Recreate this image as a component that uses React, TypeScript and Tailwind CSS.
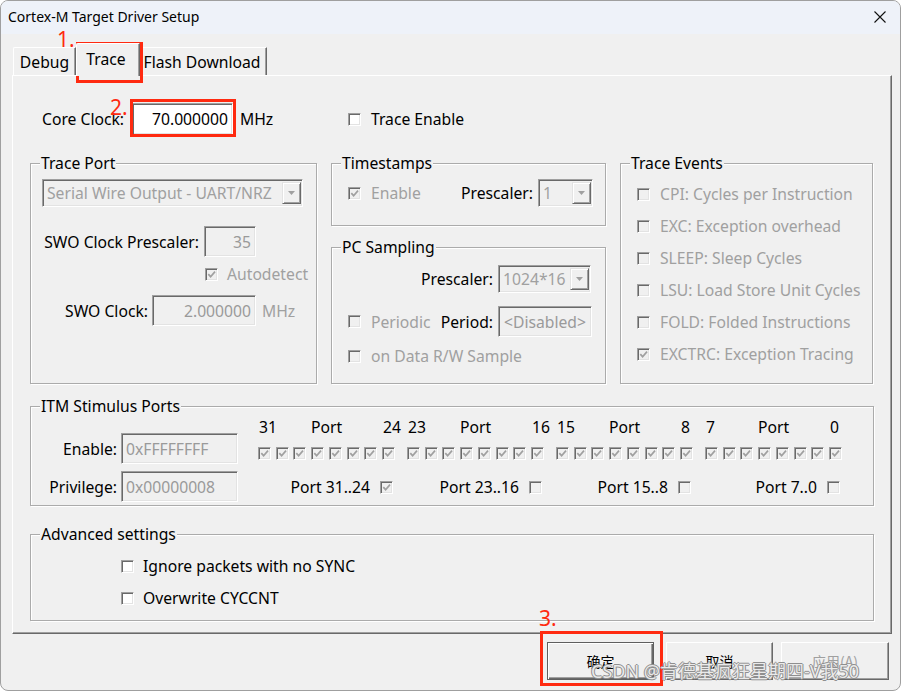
import React from "react";

const SUNKEN =
  "border border-t-[#a0a0a0] border-l-[#a0a0a0] border-b-white border-r-white shadow-[inset_1px_1px_0_#696969,inset_-1px_-1px_0_#e3e3e3]";

function Check({ checked, disabled }: { checked?: boolean; disabled?: boolean }) {
  return (
    <span
      className={`box-border inline-flex w-[13px] h-[13px] shrink-0 items-center justify-center ${SUNKEN} ${
        disabled ? "bg-[#f0f0f0]" : "bg-white"
      }`}
    >
      {checked && (
        <svg width="9" height="9" viewBox="0 0 9 9">
          <path
            d="M1.3 4.2 L3.6 6.7 L8 1.6"
            fill="none"
            stroke={disabled ? "#a0a0a0" : "#000"}
            strokeWidth="1.7"
          />
        </svg>
      )}
    </span>
  );
}

function Field({
  cls,
  value,
  disabled,
  align,
}: {
  cls: string;
  value: string;
  disabled?: boolean;
  align: "left" | "right" | "center";
}) {
  return (
    <div
      className={`${cls} box-border flex shrink-0 items-center ${SUNKEN} ${
        disabled ? "bg-[#f0f0f0] text-[#9a9a9a]" : "bg-white text-black"
      } ${
        align === "right"
          ? "justify-end pr-[4px]"
          : align === "center"
          ? "justify-center"
          : "justify-start pl-[4px]"
      }`}
    >
      <span className="whitespace-nowrap">{value}</span>
    </div>
  );
}

function Combo({ cls, value }: { cls: string; value: string }) {
  return (
    <div className={`${cls} h-[28px] box-border flex shrink-0 items-center ${SUNKEN} bg-[#f0f0f0] pl-[4px] pr-[1px]`}>
      <span className="flex-1 text-[#a0a0a0] whitespace-nowrap overflow-hidden">{value}</span>
      <span className="w-[19px] h-[22px] box-border flex items-center justify-center border border-t-[#e3e3e3] border-l-[#e3e3e3] border-b-[#696969] border-r-[#696969] shadow-[inset_1px_1px_0_#fff,inset_-1px_-1px_0_#a0a0a0] bg-[#f0f0f0]">
        <svg width="7" height="4" viewBox="0 0 7 4">
          <path d="M0 0H7L3.5 4Z" fill="#a0a0a0" />
        </svg>
      </span>
    </div>
  );
}

function Group({
  title,
  cls,
  children,
}: {
  title: string;
  cls: string;
  children?: React.ReactNode;
}) {
  return (
    <div className={`box-border border border-[#ababab] shadow-[inset_1px_1px_0_#fff,1px_1px_0_#fff] ${cls}`}>
      <div className="-mt-[11px] ml-[9px] w-fit px-[1px] h-[20px] leading-[20px] bg-[#f0f0f0] whitespace-nowrap text-black">
        {title}
      </div>
      {children}
    </div>
  );
}

const events: [string, boolean][] = [
  ["CPI: Cycles per Instruction", false],
  ["EXC: Exception overhead", false],
  ["SLEEP: Sleep Cycles", false],
  ["LSU: Load Store Unit Cycles", false],
  ["FOLD: Folded Instructions", false],
  ["EXCTRC: Exception Tracing", true],
];

const portGroups: { hi: string; lo: string; label: string; on: boolean }[] = [
  { hi: "31", lo: "24", label: "Port 31..24", on: true },
  { hi: "23", lo: "16", label: "Port 23..16", on: false },
  { hi: "15", lo: "8", label: "Port 15..8", on: false },
  { hi: "7", lo: "0", label: "Port 7..0", on: false },
];

export default function App() {
  return (
    <div className="relative w-[901px] h-[691px] overflow-hidden bg-white font-['Noto_Sans','Noto_Sans_CJK_SC',sans-serif] text-[15.7px] leading-[20px] text-black">
      <div className="w-full h-full box-border rounded-[8px] border border-[#9f9f9f] bg-[#f0f0f0] flex flex-col overflow-hidden">
        {/* Title bar */}
        <div className="h-[33px] shrink-0 bg-[#eef2f9] flex items-center pl-[7px] pr-[14px] pb-[1px]">
          <span className="text-[14px] text-black">Cortex-M Target Driver Setup</span>
          <svg className="ml-auto" width="12" height="12" viewBox="0 0 12 12">
            <path d="M0.5 0.5L11.5 11.5M11.5 0.5L0.5 11.5" stroke="#111" strokeWidth="1.1" />
          </svg>
        </div>

        <div className="flex flex-col px-[11px]">
          {/* Tabs */}
          <div className="mt-[9px] h-[32px] flex items-end">
            <div className="ml-[1px] w-[63px] h-[28px] box-border flex items-center justify-center bg-[#f0f0f0] border-t border-l border-r border-t-white border-l-white border-r-[#696969] shadow-[inset_-1px_0_0_#a0a0a0] rounded-tl-[2px]">
              Debug
            </div>
            <div className="relative z-10 -mb-[1px] w-[64px] h-[33px] box-border flex items-center justify-center pb-[3px] pr-[4px] bg-[#f0f0f0] border-t border-l border-r border-t-white border-l-white border-r-[#696969] shadow-[inset_-1px_0_0_#a0a0a0] rounded-tl-[2px]">
              Trace
            </div>
            <div className="w-[127px] h-[28px] box-border flex items-center justify-center bg-[#f0f0f0] border-t border-r border-t-white border-r-[#696969] shadow-[inset_-1px_0_0_#a0a0a0] pr-[2px] whitespace-nowrap">
              Flash Download
            </div>
          </div>

          {/* Tab page */}
          <div className="w-[880px] h-[559px] box-border flex flex-col border-t border-l border-r border-b border-t-white border-l-white border-r-[#696969] border-b-[#696969] shadow-[inset_-1px_-1px_0_#a0a0a0] pt-[27px] px-[17px]">
            {/* Row 1 */}
            <div className="h-[32px] flex items-center">
              <div className="w-[318px] flex items-center pl-[12px]">
                <span className="w-[84px] whitespace-nowrap">Core Clock:</span>
                <Field cls="ml-[6px] w-[101px] h-[32px]" value="70.000000" align="right" />
                <span className="ml-[7px]">MHz</span>
              </div>
              <Check />
              <span className="ml-[10px]">Trace Enable</span>
            </div>

            {/* Row 2 */}
            <div className="mt-[28px] flex items-start gap-[14px]">
              <Group title="Trace Port" cls="w-[287px] h-[221px]">
                <Combo cls="mt-[6px] ml-[11px] w-[261px]" value="Serial Wire Output - UART/NRZ" />
                <div className="mt-[19px] h-[31px] flex items-center">
                  <span className="w-[168px] text-right whitespace-nowrap">SWO Clock Prescaler:</span>
                  <Field cls="ml-[5px] w-[52px] h-[31px]" value="35" disabled align="right" />
                </div>
                <div className="mt-[7px] h-[20px] flex items-center pl-[174px]">
                  <Check checked disabled />
                  <span className="ml-[9px] text-[#a0a0a0]">Autodetect</span>
                </div>
                <div className="mt-[11px] h-[31px] flex items-center">
                  <span className="w-[117px] text-right whitespace-nowrap">SWO Clock:</span>
                  <Field cls="ml-[4px] w-[104px] h-[31px]" value="2.000000" disabled align="right" />
                  <span className="ml-[6px] text-[#a0a0a0]">MHz</span>
                </div>
              </Group>

              <div className="w-[275px] flex flex-col">
                <Group title="Timestamps" cls="h-[63px]">
                  <div className="mt-[6px] h-[28px] flex items-center pl-[16px] pr-[12px]">
                    <Check checked disabled />
                    <span className="ml-[10px] text-[#a0a0a0]">Enable</span>
                    <span className="ml-auto">Prescaler:</span>
                    <Combo cls="ml-[5px] w-[55px]" value="1" />
                  </div>
                </Group>
                <Group title="PC Sampling" cls="mt-[21px] h-[137px]">
                  <div className="mt-[8px] h-[28px] flex items-center justify-end pr-[14px]">
                    <span>Prescaler:</span>
                    <Combo cls="ml-[5px] w-[93px]" value="1024*16" />
                  </div>
                  <div className="mt-[13px] h-[31px] flex items-center pl-[16px] pr-[13px]">
                    <Check disabled />
                    <span className="ml-[10px] text-[#a0a0a0]">Periodic</span>
                    <span className="ml-auto">Period:</span>
                    <Field cls="ml-[5px] w-[94px] h-[31px]" value="<Disabled>" disabled align="center" />
                  </div>
                  <div className="mt-[9px] h-[20px] flex items-center pl-[16px]">
                    <Check disabled />
                    <span className="ml-[10px] text-[#a0a0a0] whitespace-nowrap">on Data R/W Sample</span>
                  </div>
                </Group>
              </div>

              <Group title="Trace Events" cls="w-[253px] h-[221px]">
                <div className="mt-[11px] flex flex-col gap-[12px]">
                  {events.map(([t, c]) => (
                    <div key={t} className="h-[20px] flex items-center pl-[16px]">
                      <Check checked={c} disabled />
                      <span className="ml-[10px] text-[#a0a0a0] whitespace-nowrap">{t}</span>
                    </div>
                  ))}
                </div>
              </Group>
            </div>

            {/* Row 3 */}
            <Group title="ITM Stimulus Ports" cls="mt-[22px] h-[100px]">
              <div className="flex">
                <div className="w-[207px] flex flex-col">
                  <div className="mt-[17px] h-[31px] flex items-center">
                    <span className="w-[86px] text-right">Enable:</span>
                    <Field cls="ml-[4px] w-[117px] h-[31px]" value="0xFFFFFFFF" disabled align="left" />
                  </div>
                  <div className="mt-[7px] h-[31px] flex items-center">
                    <span className="w-[86px] text-right">Privilege:</span>
                    <Field cls="ml-[4px] w-[117px] h-[31px]" value="0x00000008" disabled align="left" />
                  </div>
                </div>
                <div className="ml-[20px] flex flex-col">
                  <div className="mt-[1px] h-[20px] flex gap-[12px]">
                    {portGroups.map((g) => (
                      <div key={g.hi} className="w-[137px] flex justify-between">
                        <span className="w-[13px] pl-[1px] whitespace-nowrap">{g.hi}</span>
                        <span>Port</span>
                        <span className="w-[13px] pl-[1px] whitespace-nowrap">{g.lo}</span>
                      </div>
                    ))}
                  </div>
                  <div className="mt-[10px] h-[13px] flex gap-[12px]">
                    {portGroups.map((g) => (
                      <div key={g.hi} className="w-[137px] flex justify-between">
                        {[0, 1, 2, 3, 4, 5, 6, 7].map((i) => (
                          <Check key={i} checked disabled />
                        ))}
                      </div>
                    ))}
                  </div>
                  <div className="mt-[17px] h-[20px] flex gap-[12px]">
                    {portGroups.map((g) => (
                      <div key={g.hi} className="w-[137px] flex items-center justify-end pr-[2px]">
                        <span className="whitespace-nowrap">{g.label}</span>
                        <span className="ml-[10px] flex">
                          <Check checked={g.on} disabled />
                        </span>
                      </div>
                    ))}
                  </div>
                </div>
              </div>
            </Group>

            {/* Row 4 */}
            <Group title="Advanced settings" cls="mt-[28px] h-[87px]">
              <div className="mt-[12px] h-[20px] flex items-center pl-[90px]">
                <Check />
                <span className="ml-[9px]">Ignore packets with no SYNC</span>
              </div>
              <div className="mt-[12px] h-[20px] flex items-center pl-[90px]">
                <Check />
                <span className="ml-[9px]">Overwrite CYCCNT</span>
              </div>
            </Group>
          </div>

          {/* Buttons */}
          <div className="mt-[8px] flex pl-[535px] font-['Noto_Sans_CJK_SC',sans-serif] text-[14px]">
            <div className="w-[108px] h-[38px] box-border flex items-center justify-center border border-[#5f5f5f] bg-[#f0f0f0] shadow-[inset_1px_1px_0_#fff,inset_-1px_-1px_0_#696969,inset_-2px_-2px_0_#a0a0a0]">
              确定
            </div>
            <div className="ml-[12px] w-[108px] h-[38px] box-border flex items-center justify-center border border-t-white border-l-white border-b-[#696969] border-r-[#696969] bg-[#f0f0f0] shadow-[inset_-1px_-1px_0_#a0a0a0]">
              取消
            </div>
            <div className="ml-[8px] w-[109px] h-[38px] box-border flex items-center justify-center border border-t-white border-l-white border-b-[#696969] border-r-[#696969] bg-[#f0f0f0] shadow-[inset_-1px_-1px_0_#a0a0a0] text-[#a0a0a0]">
              应用(A)
            </div>
          </div>
        </div>
      </div>

      {/* Red annotations (overlay) */}
      <span className="absolute left-[57px] top-[27px] text-[21px] leading-[24px] text-[#ff2a10]">1.</span>
      <div className="absolute left-[76px] top-[42px] w-[67px] h-[41px] border-[3px] border-[#ff2a10]" />
      <span className="absolute left-[110px] top-[95px] text-[21px] leading-[24px] text-[#ff2a10]">2.</span>
      <div className="absolute left-[130px] top-[99px] w-[106px] h-[38px] border-[3px] border-[#ff2a10]" />
      <span className="absolute left-[539px] top-[606px] text-[21px] leading-[24px] text-[#ff2a10]">3.</span>
      <div className="absolute left-[540px] top-[631px] w-[123px] h-[55px] border-[3px] border-[#ff2a10]" />

      {/* Watermark */}
      <span className="absolute left-[591px] top-[659px] text-[18px] leading-[24px] whitespace-nowrap text-[#ffffffd0] [text-shadow:1px_0_#8f8f8f,-1px_0_#8f8f8f,0_1px_#8f8f8f,0_-1px_#8f8f8f]">
        CSDN @肯德基疯狂星期四-V我50
      </span>
    </div>
  );
}
